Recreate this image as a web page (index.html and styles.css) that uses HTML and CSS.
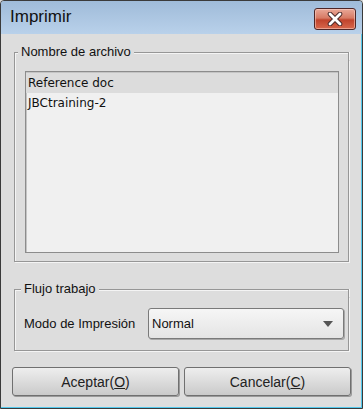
FILE: index.html
```html
<!DOCTYPE html>
<html>

<head>
    <title>Imprimir</title>
    <link rel="stylesheet" href="styles.css">
</head>

<body>
    <div class="window">
        <!-- Title bar -->
        <div class="titlebar">
            <span class="title">Imprimir</span>
            <button class="close-btn" title="Cerrar">
                <svg width="20" height="14" viewBox="0 0 20 14">
                    <path d="M5 2 L15 12 M15 2 L5 12" stroke="#4a2a2a" stroke-width="4.6" stroke-linecap="round"/>
                    <path d="M5 2 L15 12 M15 2 L5 12" stroke="#ffffff" stroke-width="2.8" stroke-linecap="round"/>
                </svg>
            </button>
        </div>

        <div class="content">
            <div class="group files">
                <div class="group-head"><span>Nombre de archivo</span></div>
                <div class="group-body">
                    <div class="file-list">
                        <div class="file-row selected">Reference doc</div>
                        <div class="file-row">JBCtraining-2</div>
                    </div>
                </div>
            </div>

            <div class="group workflow">
                <div class="group-head"><span>Flujo trabajo</span></div>
                <div class="group-body">
                    <div class="field-row">
                        <span class="field-label">Modo de Impresión</span>
                        <div class="select">
                            <span>Normal</span>
                            <span class="arrow"></span>
                        </div>
                    </div>
                </div>
            </div>

            <div class="buttons">
                <button class="btn">Aceptar(<u>O</u>)</button>
                <button class="btn">Cancelar(<u>C</u>)</button>
            </div>
        </div>
    </div>
</body>

</html>
```

FILE: styles.css
```css
body {
    margin: 0;
    font-family: "Liberation Sans", Arial, sans-serif;
    background-color: #dcdcdc;
}

.window {
    width: 363px;
    height: 409px;
    box-sizing: border-box;
    border: 1px solid #3a3a3a;
    border-radius: 4px 4px 0 0;
    background-color: #dddddd;
    box-shadow: inset -1px -1px 0 #52c8ec;
    display: flex;
    flex-direction: column;
    overflow: hidden;
}

.titlebar {
    height: 33px;
    flex: none;
    display: flex;
    align-items: center;
    justify-content: space-between;
    padding: 0 6px 0 9px;
    background: linear-gradient(#9fbbd9, #b9d1ea);
}

.title {
    font-size: 17px;
    color: #111;
    margin-top: -1px;
}

.close-btn {
    width: 42px;
    height: 22px;
    margin-top: 3px;
    padding: 0;
    border: 1px solid #4e2626;
    border-radius: 3px;
    background: linear-gradient(#e9a898 0%, #d77a64 45%, #c0432c 55%, #d8684c 100%);
    box-shadow: inset 0 0 0 1px rgba(255, 220, 210, 0.5);
    display: flex;
    align-items: center;
    justify-content: center;
}

.content {
    flex: 1;
    display: flex;
    flex-direction: column;
    padding: 10px 13px 0 13px;
}

/* group box: head line with caption, then body with the other three sides */
.group-head {
    display: flex;
    height: 16px;
    font-size: 13px;
    color: #111;
}

.group-head span {
    padding: 0 3px;
    line-height: 16px;
}

.group-head::before,
.group-head::after {
    content: "";
    align-self: flex-end;
    height: 8px;
    box-sizing: border-box;
    border-top: 1px solid #969696;
}

.group-head::before {
    width: 4px;
    border-left: 1px solid #969696;
    box-shadow: inset 1px 1px 0 #f4f4f4;
}

.group-head::after {
    flex: 1;
    border-right: 1px solid #969696;
    box-shadow: inset 0 1px 0 #f4f4f4, 1px 0 0 #f4f4f4;
}

.workflow .group-head::before {
    width: 7px;
}

.group-body {
    border: 1px solid #969696;
    border-top: none;
    box-shadow: 1px 1px 0 #f4f4f4, inset 1px 0 0 #f4f4f4;
}

.files .group-body {
    padding: 11px 9px 8px 10px;
}

.workflow {
    margin-top: 19px;
}

.workflow .group-body {
    padding: 11px 4px 11px 9px;
}

.file-list {
    height: 182px;
    box-sizing: border-box;
    border: 1px solid #8c8c8c;
    box-shadow: inset 1px 1px 0 #c4c4c4;
    background-color: #f0f0f0;
    font-family: "DejaVu Sans", Verdana, sans-serif;
    font-size: 12px;
    color: #111;
    padding-top: 1px;
}

.file-row {
    height: 20px;
    line-height: 20px;
    padding-left: 2px;
}

.file-row.selected {
    background-color: #dcdcdc;
}

.field-row {
    display: flex;
    align-items: center;
}

.field-label {
    font-size: 13px;
    color: #111;
    width: 124px;
}

.select {
    flex: 1;
    height: 31px;
    box-sizing: border-box;
    border: 1px solid #7a7a7a;
    border-radius: 3px;
    background: linear-gradient(#f6f6f6, #e4e4e4);
    box-shadow: 1px 1px 0 #a8a8a8;
    display: flex;
    align-items: center;
    justify-content: space-between;
    padding: 0 10px 0 3px;
    font-size: 13px;
    color: #111;
}

.arrow {
    width: 0;
    height: 0;
    border-left: 5px solid transparent;
    border-right: 5px solid transparent;
    border-top: 6px solid #555;
}

.buttons {
    display: flex;
    justify-content: space-between;
    margin: 16px -2px 0 -2px;
}

.btn {
    width: 167px;
    height: 29px;
    border: 1px solid #707070;
    border-radius: 3px;
    background: linear-gradient(#eeeeee, #cacaca);
    box-shadow: 1px 1px 0 #9a9a9a;
    font-family: "Liberation Sans", Arial, sans-serif;
    font-size: 14px;
    color: #222;
}
```
